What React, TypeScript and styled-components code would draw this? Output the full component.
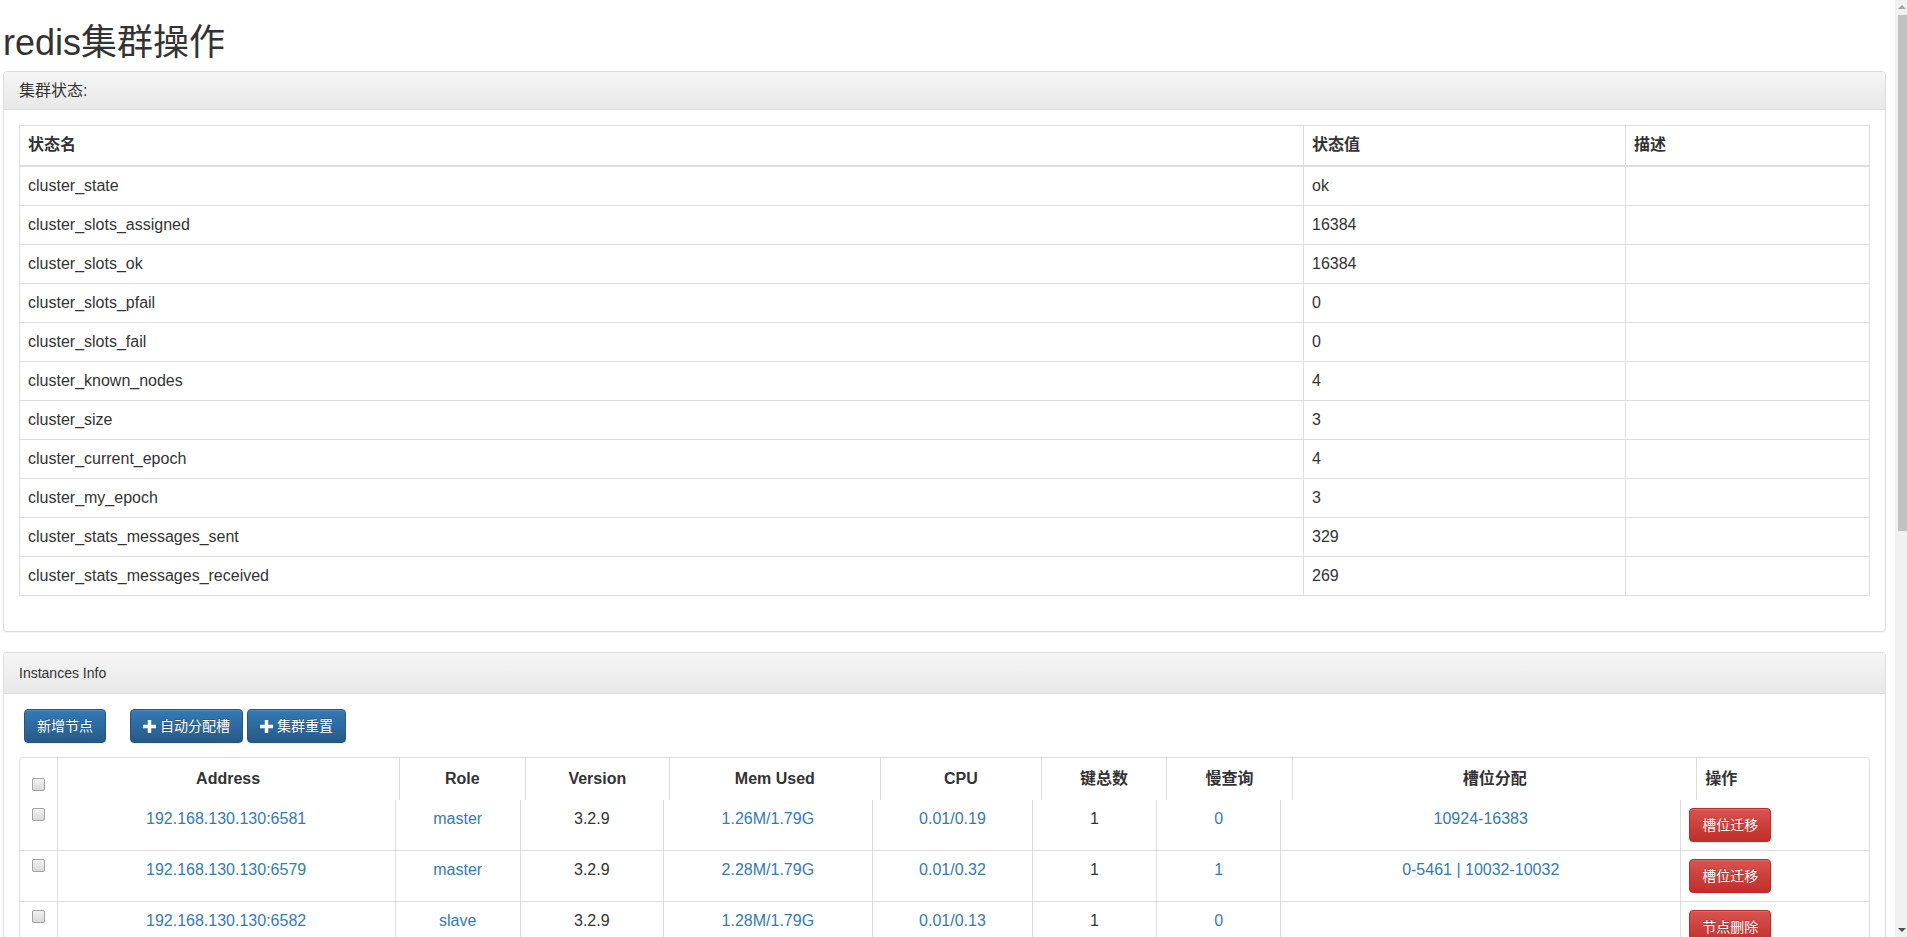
import React from "react";
import styled, { createGlobalStyle, css } from "styled-components";

const GlobalStyle = createGlobalStyle`
  html, body {
    margin: 0;
    padding: 0;
    height: 100%;
    overflow: hidden;
    background: #fff;
  }
  body {
    font-family: "Liberation Sans", Arial, "Noto Sans CJK SC", sans-serif;
    font-size: 14px;
    line-height: 20px;
    color: #333;
  }
  * { box-sizing: border-box; }
`;

const Frame = styled.div`
  display: flex;
  height: 100vh;
  overflow: hidden;
`;

const Page = styled.main`
  flex: 1;
  min-width: 0;
  overflow: hidden;
  padding: 0 9px 0 3px;
`;

const Title = styled.h1`
  margin: 23px 0 8px;
  font-size: 36px;
  line-height: 40px;
  font-weight: 400;
  color: #333;
`;

const Panel = styled.section`
  border: 1px solid #ddd;
  border-radius: 4px;
  background: #fff;
  margin-bottom: 20px;
  box-shadow: 0 1px 2px rgba(0, 0, 0, 0.05);
`;

const PanelHeading = styled.div`
  padding: 10px 15px;
  font-size: 14px;
  line-height: 20px;
  color: #333;
  background-image: linear-gradient(to bottom, #f5f5f5 0%, #e8e8e8 100%);
  border-bottom: 1px solid #ddd;
  border-radius: 3px 3px 0 0;
`;

const PanelTitle = styled.h3`
  margin: 0;
  font-size: 16px;
  line-height: 17px;
  font-weight: 400;
  color: #333;
`;

const PanelBody = styled.div`
  padding: 15px;
`;

const StatusTable = styled.table`
  width: 100%;
  border-collapse: collapse;
  border: 1px solid #ddd;
  table-layout: fixed;
  font-size: 16px;
  line-height: 22px;
  margin-bottom: 20px;
`;

const cellBase = css`
  padding: 8px;
  border: 1px solid #ddd;
  vertical-align: top;
  color: #333;
`;

const STh = styled.th`
  ${cellBase};
  padding-bottom: 9px;
  text-align: left;
  font-weight: 700;
  vertical-align: bottom;
  border-bottom-width: 2px;
`;

const STd = styled.td`
  ${cellBase};
`;

const Toolbar = styled.div`
  display: flex;
  align-items: center;
  gap: 4px;
  margin-bottom: 14px;
  padding-left: 5px;
`;

const Button = styled.button<{ $variant: "primary" | "danger"; $spaced?: boolean }>`
  display: inline-flex;
  align-items: center;
  gap: 4px;
  height: 34px;
  padding: 0 12px;
  font-family: inherit;
  font-size: 14px;
  line-height: 20px;
  color: #fff;
  border-radius: 4px;
  border: 1px solid;
  cursor: pointer;
  text-shadow: 0 -1px 0 rgba(0, 0, 0, 0.2);
  box-shadow: inset 0 1px 0 rgba(255, 255, 255, 0.15), 0 1px 1px rgba(0, 0, 0, 0.075);
  white-space: nowrap;
  margin-right: ${(p) => (p.$spaced ? "20px" : "0")};
  ${(p) =>
    p.$variant === "primary"
      ? css`
          background-image: linear-gradient(to bottom, #337ab7 0%, #265a88 100%);
          border-color: #245580;
        `
      : css`
          background-image: linear-gradient(to bottom, #d9534f 0%, #c12e2a 100%);
          border-color: #b92c28;
        `}
`;

const PlusIcon = styled.svg`
  width: 13px;
  height: 13px;
  flex: none;
  fill: #fff;
`;

const GridFrame = styled.div`
  border: 1px solid #ddd;
  border-radius: 4px 4px 0 0;
  overflow: hidden;
`;

const GridTable = styled.table`
  width: 100%;
  border-collapse: collapse;
  border-style: hidden;
  table-layout: fixed;
  font-size: 16px;
  line-height: 22px;
`;

const GTh = styled.th<{ $left?: boolean }>`
  padding: 10px 8px;
  border: 1px solid #ddd;
  border-bottom-width: 2px;
  font-weight: 700;
  color: #333;
  vertical-align: bottom;
  text-align: ${(p) => (p.$left ? "left" : "center")};
  white-space: nowrap;
`;

const GTd = styled.td<{ $left?: boolean }>`
  padding: 8px;
  border: 1px solid #ddd;
  vertical-align: top;
  color: #333;
  text-align: ${(p) => (p.$left ? "left" : "center")};
  white-space: nowrap;
`;

const Col = styled.col<{ $w: number }>`
  width: ${(p) => p.$w}px;
`;

const Link = styled.a`
  color: #337ab7;
  text-decoration: none;
`;

const Check = styled.input.attrs({ type: "checkbox" })<{ $head?: boolean }>`
  appearance: none;
  -webkit-appearance: none;
  display: block;
  width: 13px;
  height: 13px;
  margin: ${(p) => (p.$head ? "10px auto -1px" : "0 auto")};
  border: 1px solid #a3a3a3;
  border-radius: 2px;
  background: linear-gradient(to bottom, #f2f2f2 0%, #d9d9d9 100%);
`;

const ScrollTrack = styled.div`
  width: 12px;
  flex: none;
  height: 100vh;
  background: #f1f1f1;
  display: flex;
  flex-direction: column;
`;

const ScrollButton = styled.div<{ $down?: boolean }>`
  height: 14px;
  flex: none;
  display: flex;
  align-items: center;
  justify-content: flex-end;
  padding-right: 1px;
  &::after {
    content: "";
    width: 0;
    height: 0;
    border-left: 4px solid transparent;
    border-right: 4px solid transparent;
    ${(p) =>
      p.$down
        ? css`border-top: 4px solid #505050;`
        : css`border-bottom: 4px solid #a3a3a3;`}
  }
`;

const ScrollArea = styled.div`
  flex: 1;
  display: flex;
  flex-direction: column;
  padding-left: 3px;
`;

const ScrollThumb = styled.div`
  height: 516px;
  margin-top: 1px;
  background: #c1c1c1;
`;

const statusRows: [string, string][] = [
  ["cluster_state", "ok"],
  ["cluster_slots_assigned", "16384"],
  ["cluster_slots_ok", "16384"],
  ["cluster_slots_pfail", "0"],
  ["cluster_slots_fail", "0"],
  ["cluster_known_nodes", "4"],
  ["cluster_size", "3"],
  ["cluster_current_epoch", "4"],
  ["cluster_my_epoch", "3"],
  ["cluster_stats_messages_sent", "329"],
  ["cluster_stats_messages_received", "269"],
];

type Node = {
  addr: string;
  role: string;
  version: string;
  mem: string;
  cpu: string;
  keys: string;
  slow: string;
  slots: string;
  action: string;
};

const nodes: Node[] = [
  { addr: "192.168.130.130:6581", role: "master", version: "3.2.9", mem: "1.26M/1.79G", cpu: "0.01/0.19", keys: "1", slow: "0", slots: "10924-16383", action: "槽位迁移" },
  { addr: "192.168.130.130:6579", role: "master", version: "3.2.9", mem: "2.28M/1.79G", cpu: "0.01/0.32", keys: "1", slow: "1", slots: "0-5461 | 10032-10032", action: "槽位迁移" },
  { addr: "192.168.130.130:6582", role: "slave", version: "3.2.9", mem: "1.28M/1.79G", cpu: "0.01/0.13", keys: "1", slow: "0", slots: "", action: "节点删除" },
  { addr: "192.168.130.130:6580", role: "master", version: "3.2.9", mem: "1.27M/1.79G", cpu: "0.01/0.21", keys: "1", slow: "0", slots: "5462-10031 | 10033-10923", action: "槽位迁移" },
];

const headCols = [37, 342, 126, 144, 211, 161, 125, 126, 404, 172];
const bodyCols = [37, 338, 125, 143, 209, 160, 124, 124, 400, 188];

const Plus = () => (
  <PlusIcon viewBox="0 0 12 12">
    <path d="M4.4 0h3.2v4.4H12v3.2H7.6V12H4.4V7.6H0V4.4h4.4z" />
  </PlusIcon>
);

export default function App() {
  return (
    <>
      <GlobalStyle />
      <Frame>
        <Page>
          <Title>redis集群操作</Title>

          <Panel>
            <PanelHeading>
              <PanelTitle>集群状态:</PanelTitle>
            </PanelHeading>
            <PanelBody>
              <StatusTable>
                <colgroup>
                  <Col $w={1284} />
                  <Col $w={322} />
                  <Col $w={244} />
                </colgroup>
                <thead>
                  <tr>
                    <STh>状态名</STh>
                    <STh>状态值</STh>
                    <STh>描述</STh>
                  </tr>
                </thead>
                <tbody>
                  {statusRows.map(([k, v]) => (
                    <tr key={k}>
                      <STd>{k}</STd>
                      <STd>{v}</STd>
                      <STd />
                    </tr>
                  ))}
                </tbody>
              </StatusTable>
            </PanelBody>
          </Panel>

          <Panel>
            <PanelHeading>Instances Info</PanelHeading>
            <PanelBody>
              <Toolbar>
                <Button $variant="primary" $spaced>新增节点</Button>
                <Button $variant="primary">
                  <Plus />
                  自动分配槽
                </Button>
                <Button $variant="primary">
                  <Plus />
                  集群重置
                </Button>
              </Toolbar>
              <GridFrame>
                <GridTable>
                  <colgroup>
                    {headCols.map((w, i) => (
                      <Col key={i} $w={w} />
                    ))}
                  </colgroup>
                  <thead>
                    <tr>
                      <GTh>
                        <Check $head />
                      </GTh>
                      <GTh>Address</GTh>
                      <GTh>Role</GTh>
                      <GTh>Version</GTh>
                      <GTh>Mem Used</GTh>
                      <GTh>CPU</GTh>
                      <GTh>键总数</GTh>
                      <GTh>慢查询</GTh>
                      <GTh>槽位分配</GTh>
                      <GTh $left>操作</GTh>
                    </tr>
                  </thead>
                </GridTable>
                <GridTable>
                  <colgroup>
                    {bodyCols.map((w, i) => (
                      <Col key={i} $w={w} />
                    ))}
                  </colgroup>
                  <tbody>
                    {nodes.map((n) => (
                      <tr key={n.addr}>
                        <GTd>
                          <Check />
                        </GTd>
                        <GTd><Link href="#">{n.addr}</Link></GTd>
                        <GTd><Link href="#">{n.role}</Link></GTd>
                        <GTd>{n.version}</GTd>
                        <GTd><Link href="#">{n.mem}</Link></GTd>
                        <GTd><Link href="#">{n.cpu}</Link></GTd>
                        <GTd>{n.keys}</GTd>
                        <GTd><Link href="#">{n.slow}</Link></GTd>
                        <GTd><Link href="#">{n.slots}</Link></GTd>
                        <GTd $left>
                          <Button $variant="danger">{n.action}</Button>
                        </GTd>
                      </tr>
                    ))}
                  </tbody>
                </GridTable>
              </GridFrame>
            </PanelBody>
          </Panel>
        </Page>
        <ScrollTrack aria-hidden>
          <ScrollButton />
          <ScrollArea>
            <ScrollThumb />
          </ScrollArea>
          <ScrollButton $down />
        </ScrollTrack>
      </Frame>
    </>
  );
}
